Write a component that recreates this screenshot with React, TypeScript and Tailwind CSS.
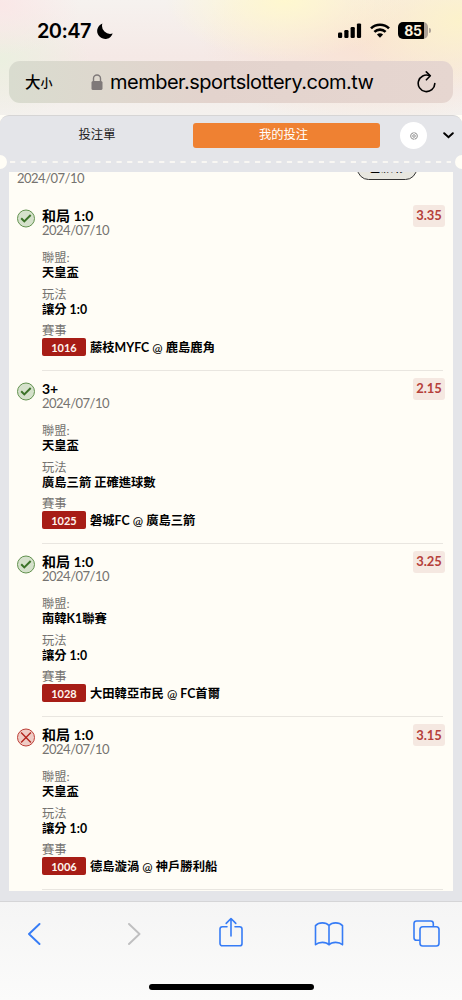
import { Fragment } from "react";

interface Bet {
  title: string;
  date: string;
  odds: string;
  won: boolean;
  league: string;
  play: string;
  code: string;
  home: string;
  away: string;
}

const bets: Bet[] = [
  {
    title: "和局 1:0",
    date: "2024/07/10",
    odds: "3.35",
    won: true,
    league: "天皇盃",
    play: "讓分 1:0",
    code: "1016",
    home: "藤枝MYFC",
    away: "鹿島鹿角",
  },
  {
    title: "3+",
    date: "2024/07/10",
    odds: "2.15",
    won: true,
    league: "天皇盃",
    play: "廣島三箭 正確進球數",
    code: "1025",
    home: "磐城FC",
    away: "廣島三箭",
  },
  {
    title: "和局 1:0",
    date: "2024/07/10",
    odds: "3.25",
    won: true,
    league: "南韓K1聯賽",
    play: "讓分 1:0",
    code: "1028",
    home: "大田韓亞市民",
    away: "FC首爾",
  },
  {
    title: "和局 1:0",
    date: "2024/07/10",
    odds: "3.15",
    won: false,
    league: "天皇盃",
    play: "讓分 1:0",
    code: "1006",
    home: "德島漩渦",
    away: "神戶勝利船",
  },
];

const StatusBar = (): React.ReactElement => {
  return (
    <div className="flex h-[61px] items-center pl-[37px] pr-[31px]">
      <span className="w-[55px] whitespace-nowrap text-[20px] leading-none font-semibold tracking-[-0.6px]">
        20:47
      </span>
      <svg className="ml-[5px] mt-px size-4" viewBox="0 0 16 16">
        <path
          d="M5.4.4a8 8 0 1 0 10.3 10.2A8.2 8.2 0 0 1 5.400.400Z"
          fill="#000"
        />
      </svg>
      <svg className="ml-auto h-[15px] w-[24px]" viewBox="0 0 24 15">
        <rect x="0" y="9.5" width="4.2" height="5.5" rx="1.2" />
        <rect x="6.3" y="7" width="4.2" height="8" rx="1.2" />
        <rect x="12.6" y="4" width="4.2" height="11" rx="1.2" />
        <rect x="18.9" y="0.4" width="4.2" height="14.6" rx="1.2" />
      </svg>
      <svg className="ml-[8px] h-[15px] w-5" viewBox="0 0 20 15">
        <g fill="none" stroke="#000" strokeWidth="2.6">
          <path d="M1 5.4a13 13 0 0 1 18 0" />
          <path d="M4.4 8.9a8 8 0 0 1 11.2 0" />
        </g>
        <path d="m10 14.8-3.1-3.2a4.500 4.500 0 0 1 6.200 0Z" />
      </svg>
      <div className="ml-[8px] flex items-center">
        <div className="flex h-[17px] w-[30px] items-center justify-center rounded-[5px] bg-linear-to-r from-black from-86% to-[#aca196] to-86% text-[14px] leading-none font-bold tracking-[-0.4px] text-[#fdf0dc]">
          85
        </div>
        <div className="ml-px h-[5px] w-[2px] rounded-r-full bg-[#aca196]" />
      </div>
    </div>
  );
};

const AddressBar = (): React.ReactElement => {
  return (
    <div className="mx-[9px] flex h-[42px] items-center rounded-[11px] bg-linear-to-r from-[#d9dccf] via-[#e3d3cd] via-45% to-[#e6d6d0] pl-4 pr-[17px]">
      <span className="mt-0.5 flex w-[29px] items-baseline leading-none font-medium">
        <span className="text-[15.500px]">大</span>
        <span className="text-[12px]">小</span>
      </span>
      <svg className="ml-[37px] mb-px h-4 w-3" viewBox="0 0 12 16">
        <rect x="0.5" y="7" width="11" height="9" rx="1.6" fill="#7f7979" />
        <path
          d="M2.5 8V4.5a3.5 3.5 0 0 1 7 0V8"
          fill="none"
          stroke="#7f7979"
          strokeWidth="1.4"
        />
      </svg>
      <span className="ml-[7px] whitespace-nowrap text-[20px] leading-none tracking-[-0.5px]">
        member.sportslottery.com.tw
      </span>
      <svg
        className="ml-auto h-[22px] w-[19px]"
        viewBox="0 0 19 22"
        fill="none"
        stroke="#000"
        strokeWidth="1.6"
        strokeLinecap="round"
        strokeLinejoin="round"
      >
        <path d="M12.5 4.600A8.300 8.300 0 1 0 17.800 12.600" />
        <path d="m9.300 .9 4 3.900-3.900 4" />
      </svg>
    </div>
  );
};

const Tabs = (): React.ReactElement => {
  return (
    <div className="flex h-[39px] items-center pr-2 text-[12.3px]">
      <span className="w-[193px] pl-px text-center text-[#222]">投注單</span>
      <span className="flex h-[25px] w-[187px] items-center justify-center rounded-[3px] bg-[#ef8132] pr-[6px] text-white">
        我的投注
      </span>
      <span className="ml-5 flex size-[27px] items-center justify-center rounded-full bg-white">
        <svg
          className="size-2"
          viewBox="0 0 16 16"
          fill="none"
          stroke="#777"
          strokeWidth="1.5"
        >
          <path d="m8 .8 1.7 1.7 2.4-.3.6 2.3 2.2 1.1L14 8l.9 2.4-2.2 1.1-.6 2.3-2.4-.3L8 15.2l-1.7-1.7-2.4.3-.6-2.3-2.2-1.1L2 8l-.9-2.4 2.2-1.1.6-2.3 2.4.3Z" />
          <circle cx="8" cy="8" r="2.6" />
        </svg>
      </span>
      <svg
        className="ml-4 h-[7px] w-[11px]"
        viewBox="0 0 11 7"
        fill="none"
        stroke="#000"
        strokeWidth="2"
        strokeLinecap="round"
      >
        <path d="m1.2 1.2 4.3 4 4.3-4" />
      </svg>
    </div>
  );
};

// Ticket style cut between the tabs and the slip
const Perforation = (): React.ReactElement => {
  return (
    <div className="-mx-[7px] flex h-[14px] items-center justify-between">
      <span className="size-[14px] shrink-0 rounded-full bg-[#fffdf6]" />
      <svg className="h-[2px] w-[444px]" viewBox="0 0 444 2">
        <line
          x1="1"
          y1="1"
          x2="442"
          y2="1"
          stroke="#fffdf6"
          strokeWidth="1.6"
          strokeDasharray="5.2 5.45"
        />
      </svg>
      <span className="size-[14px] shrink-0 rounded-full bg-[#fffdf6]" />
    </div>
  );
};

const ResultIcon = ({ won }: { won: boolean }): React.ReactElement => {
  return (
    <svg
      className="mt-[10.500px] h-[19px] w-[19px] shrink-0"
      viewBox="0 0 19 19"
      fill="none"
    >
      <circle
        cx="9"
        cy="9.5"
        r="8.5"
        fill={won ? "#d5e1cb" : "#efccc5"}
        stroke={won ? "#62924f" : "#bd3f37"}
        strokeWidth="1"
      />
      {won ? (
        <path d="m4.200 9.300 3.100 3.100 6.400-6.400" stroke="#3b7228" strokeWidth="2" />
      ) : (
        <path
          d="m4.1 4.6 9.8 9.8m0-9.8-9.8 9.8"
          stroke="#b3261e"
          strokeWidth="1.4"
        />
      )}
    </svg>
  );
};

const BetRow = ({ bet }: { bet: Bet }): React.ReactElement => {
  return (
    <div className="flex h-[173.1px] pl-2 pr-[10px]">
      <ResultIcon won={bet.won} />
      <div className="ml-[6px] flex flex-1 flex-col border-b border-[#e9e6e0] pt-[9px]">
        <div className="flex justify-between">
          <div>
            <h3 className="mt-px h-[15px] text-[14px] leading-4 font-bold">
              {bet.title}
            </h3>
            <p className="text-[13px] leading-[15px] tracking-[-0.5px] text-[#757370]">
              {bet.date}
            </p>
          </div>
          <span className="-mt-[2px] -mr-[2px] flex h-[22px] w-8 items-center justify-center rounded-[3px] bg-[#f5e8e1] text-[13px] font-bold text-[#b5403a]">
            {bet.odds}
          </span>
        </div>
        <dl className="mt-3 text-[12.3px] leading-[15px]">
          <dt className="text-[#757370]">聯盟:</dt>
          <dd className="mb-[6.5px] font-bold">{bet.league}</dd>
          <dt className="text-[#757370]">玩法</dt>
          <dd className="mb-[6.5px] font-bold">{bet.play}</dd>
          <dt className="text-[#757370]">賽事</dt>
          <dd className="flex h-[18px] items-center font-bold whitespace-pre">
            <span className="mr-1 flex h-[18px] w-11 items-center justify-center rounded-[2px] bg-[#a71d16] text-[11px] text-[#fff5ef]">
              {bet.code}
            </span>
            {bet.home}
            <span className="font-medium"> @ </span>
            {bet.away}
          </dd>
        </dl>
      </div>
    </div>
  );
};

const BetList = (): React.ReactElement => {
  return (
    <div className="mx-[9px] mt-[3px] h-[719px] overflow-hidden bg-[#fffdf6]">
      <div className="-mt-[15px] flex h-[41px] justify-between pl-2 pr-9">
        <span className="mt-[13px] text-[13px] leading-4 tracking-[-0.5px] text-[#757370]">
          2024/07/10
        </span>
        <span className="flex h-[23px] w-[60px] items-center justify-center rounded-full border border-[#333] bg-[#e7e6df] text-[12.3px] font-medium">
          已派彩
        </span>
      </div>
      {bets.map((bet) => (
        <Fragment key={bet.code}>
          <BetRow bet={bet} />
        </Fragment>
      ))}
    </div>
  );
};

const Toolbar = (): React.ReactElement => {
  return (
    <div className="flex h-[99px] flex-col border-t border-[#d5d5d7] bg-linear-to-b from-[#f5f5f5] to-[#fbfbfa]">
      <div className="flex h-[63px] items-center pl-[27px]">
        <svg
          className="h-[22px] w-[14px]"
          viewBox="0 0 14 22"
          fill="none"
          stroke="#367cf6"
          strokeWidth="1.9"
          strokeLinecap="round"
          strokeLinejoin="round"
        >
          <path d="M12.5 1 2 11l10.5 10" />
        </svg>
        <svg
          className="ml-[86px] h-[22px] w-[14px]"
          viewBox="0 0 14 22"
          fill="none"
          stroke="#bfbfc0"
          strokeWidth="1.9"
          strokeLinecap="round"
          strokeLinejoin="round"
        >
          <path d="M2 1 12.500 11 2 21" />
        </svg>
        <svg
          className="ml-[78px] mb-[3px] h-[30px] w-6"
          viewBox="0 0 24 30"
          fill="none"
          stroke="#367cf6"
          strokeWidth="1.6"
          strokeLinecap="round"
          strokeLinejoin="round"
        >
          <path d="M8 9.7H3.4A2.4 2.4 0 0 0 1 12.1v14.3a2.4 2.4 0 0 0 2.4 2.4h17.2a2.4 2.4 0 0 0 2.4-2.4V12.1a2.4 2.4 0 0 0-2.4-2.4H16" />
          <path d="M12 19V1.8M7.2 6.4 12 1.5l4.8 4.9" />
        </svg>
        <svg
          className="ml-[70.5px] h-6 w-[30px]"
          viewBox="0 0 30 24"
          fill="none"
          stroke="#367cf6"
          strokeWidth="1.6"
          strokeLinejoin="round"
        >
          <path d="M15 3.600C12 0 4.800 0 1.500 3.600V22.800C4.800 19.600 12 19.600 15 22.800C18 19.600 25.200 19.600 28.500 22.800V3.600C25.200 0 18 0 15 3.600V22.800" />
        </svg>
        <svg
          className="ml-[69.5px] h-[27px] w-[27px]"
          viewBox="0 0 27 27"
          fill="none"
          stroke="#367cf6"
          strokeWidth="1.6"
        >
          <path d="M6.800 20.300H3.600A2.600 2.600 0 0 1 1 17.700V3.600A2.600 2.600 0 0 1 3.600 1h14.100a2.600 2.600 0 0 1 2.600 2.600v2.900" />
          <rect x="7" y="6.7" width="19" height="19.3" rx="2.7" />
        </svg>
      </div>
      <div className="mx-auto mt-[19px] h-[6px] w-[165px] rounded-full bg-black" />
    </div>
  );
};

const App = (): React.ReactElement => {
  return (
    <div className="h-[1000px] w-[462px] overflow-hidden bg-[#e4e5e9] font-['Lato','Noto_Sans_CJK_TC',sans-serif] text-black">
      <header className="h-[115px] bg-[radial-gradient(ellipse_120px_60px_at_285px_0px,#fff8cf,transparent),radial-gradient(ellipse_120px_70px_at_462px_20px,#fcf2cb,transparent),radial-gradient(ellipse_170px_90px_at_370px_40px,#f9e2d3,transparent),radial-gradient(ellipse_80px_50px_at_0px_5px,#fae7e7,transparent),radial-gradient(ellipse_90px_60px_at_0px_60px,#ebf0e0,transparent),linear-gradient(180deg,#f6f2ef,#f5e9e6_50%,#f4f1ee)] font-['Inter','Noto_Sans_CJK_TC',sans-serif]">
        <StatusBar />
        <AddressBar />
      </header>
      <div className="bg-[#fffdf6]">
        <div className="overflow-hidden rounded-t-[9px] border-t border-[#d6d5d5] bg-[#e4e5e9]">
          <Tabs />
          <Perforation />
        </div>
      </div>
      <BetList />
      <div className="h-[10px]" />
      <Toolbar />
    </div>
  );
};

export default App;
